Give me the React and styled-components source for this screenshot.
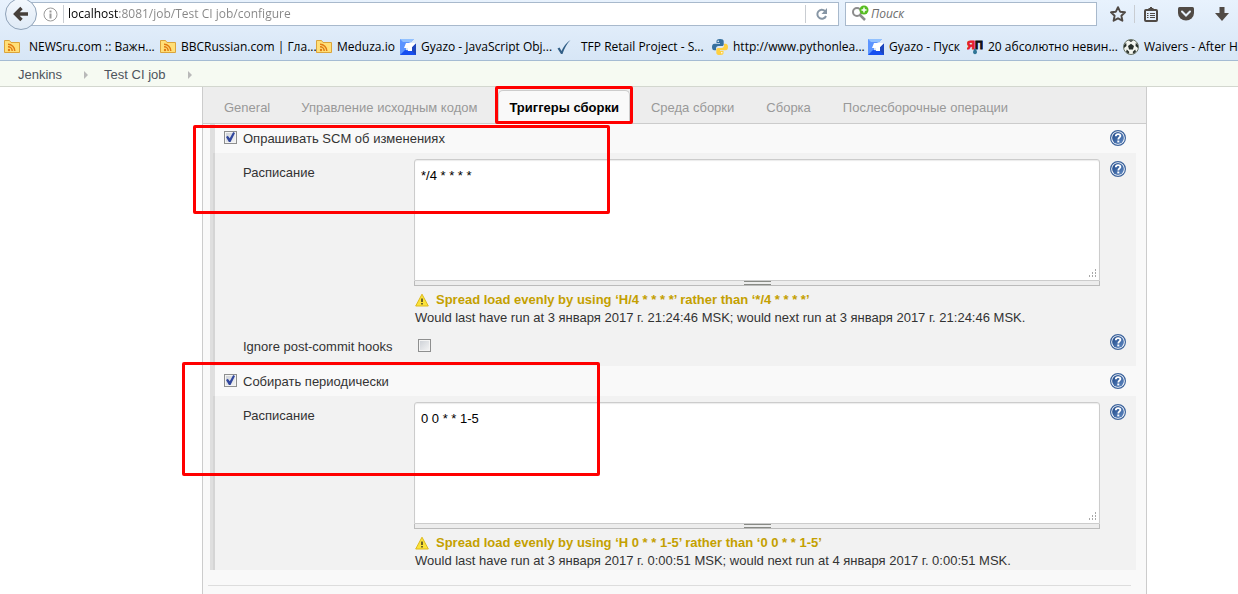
import React from "react";
import styled, { createGlobalStyle, css } from "styled-components";

const GlobalStyle = createGlobalStyle`
  *, *::before, *::after { box-sizing: border-box; }
  html, body { margin: 0; background: #fff; }
  body { overflow: hidden; font: 13px/18px "Liberation Sans", Arial, sans-serif; color: #333; }
`;

const Page = styled.div`
  display: flex;
  flex-direction: column;
  min-height: 100vh;
`;

/* Browser chrome */
const Chrome = styled.header`
  display: flex;
  flex-direction: column;
  gap: 6px;
  overflow: hidden;
  border-bottom: 1px solid #a5bbd3;
  background: linear-gradient(#e8f2fd, #d7e6f6);
  font: 12px/18px "Open Sans", "Noto Sans", sans-serif;
  color: #000;
`;

const NavBar = styled.div`
  display: flex;
  align-items: center;
  height: 28px;
  padding-left: 5px;
`;

const BackButton = styled.button`
  position: relative;
  flex: none;
  display: grid;
  place-items: center;
  width: 32px;
  height: 32px;
  padding: 0;
  border: 1px solid #8fa2b8;
  border-radius: 50%;
  background: linear-gradient(#f4f8fd, #dfeaf6);
`;

const UrlBar = styled.div`
  flex: 1;
  display: flex;
  align-items: center;
  height: 24px;
  margin-left: -16px;
  padding-left: 20px;
  border: 1px solid #a8b9cc;
  background: #fff;
`;

const UrlInput = styled.input`
  flex: 1;
  min-width: 0;
  padding: 0;
  border: 0;
  outline: 0;
  font: inherit;
  color: transparent;
  background: linear-gradient(90deg, #000 50px, #858585 50px);
  -webkit-background-clip: text;
  background-clip: text;
`;

const Divider = styled.span`
  flex: none;
  width: 1px;
  height: 18px;
  background: #c9cdd2;
`;

const IconButton = styled.button`
  flex: none;
  display: grid;
  place-items: center;
  width: ${(p) => p.$width || 32}px;
  height: 22px;
  padding: 0;
  border: 0;
  background: none;
`;

const SearchBar = styled.label`
  flex: none;
  display: flex;
  align-items: center;
  gap: 2px;
  width: 252px;
  height: 24px;
  margin: 0 5px 0 6px;
  padding-left: 5px;
  border: 1px solid #a8b9cc;
  background: #fff;
`;

const SearchInput = styled.input`
  flex: 1;
  min-width: 0;
  padding: 0;
  border: 0;
  outline: 0;
  font: inherit;
  background: none;
  &::placeholder { font-style: italic; color: #6d6d6d; opacity: 1; }
`;

const BookmarkBar = styled.nav`
  display: flex;
  align-items: center;
  height: 26px;
  padding-left: 4px;
`;

const Bookmark = styled.a`
  flex: none;
  display: flex;
  align-items: center;
  gap: ${(p) => (p.$spaced ? 9 : 5)}px;
  width: ${(p) => p.$width}px;
  color: #000;
  text-decoration: none;
  white-space: nowrap;
  svg { flex: none; }
`;

/* Jenkins page */
const Breadcrumbs = styled.nav`
  display: flex;
  align-items: center;
  gap: 22px;
  height: 26px;
  padding: 2px 0 0 18px;
  border-bottom: 1px solid #d3d7cf;
  background: #f6faf2;
`;

const Crumb = styled.a`
  color: #4d545d;
  text-decoration: none;
`;

const CrumbArrow = styled.span`
  margin-right: -6px;
  border: 4px solid transparent;
  border-right: 0;
  border-left-color: #b9b9b9;
`;

const Panel = styled.main`
  flex: 1;
  margin: 0 91px 0 202px;
  border: 1px solid #ccc;
  border-width: 0 1px;
  background: #f9f9f9;
`;

const TabBar = styled.nav`
  position: relative;
  z-index: 1;
  display: flex;
  height: 36px;
  padding: 3px 0 0;
  background: #ededed;
  box-shadow: 0 1px 0 #ccc;
`;

const Tab = styled.a`
  position: relative;
  margin: 0 5px;
  padding: 8px 10px 0;
  border: 1px solid transparent;
  border-bottom: 0;
  border-radius: 5px 5px 0 0;
  color: #999;
  text-decoration: none;
  white-space: nowrap;
  &:first-child { margin: 0 4px 0 10px; }
  ${(p) =>
    p.$active &&
    css`
      border-color: #ccc;
      background: #f9f9f9;
      color: #000;
      font-weight: bold;
    `}
`;

const Highlight = styled.span`
  position: absolute;
  z-index: 2;
  border: 3px solid #f00;
  border-radius: 2px;
  pointer-events: none;
`;

const TabHighlight = styled(Highlight)`
  inset: -5px -4px -1px;
`;

const BlockHighlight = styled(Highlight)`
  top: ${(p) => p.$top}px;
  left: ${(p) => p.$left}px;
  width: ${(p) => p.$width}px;
  height: ${(p) => p.$height}px;
`;

const Trigger = styled.section`
  position: relative;
  margin: 0 10px 0 7px;
`;

const TriggerHeader = styled.div`
  display: flex;
  align-items: flex-start;
  justify-content: space-between;
  height: 30px;
  padding: 7px 10px 0 9px;
  border-left: 5px solid #dfdfdf;
`;

const CheckLabel = styled.label`
  display: flex;
  align-items: center;
  gap: 6px;
`;

const Checkbox = styled.input.attrs({ type: "checkbox" })`
  appearance: none;
  flex: none;
  display: grid;
  place-items: center;
  width: 13px;
  height: 13px;
  margin: 0 0 4px;
  border: 1px solid #8e8f8f;
  background: linear-gradient(135deg, #cbcfd5, #f6f6f6);
  box-shadow: inset 0 0 0 1px #f4f4f4;
  &:checked::before {
    content: "";
    width: 9px;
    height: 10px;
    background: #31479e;
    clip-path: polygon(0 50%, 20% 38%, 42% 62%, 80% 0, 100% 10%, 50% 100%, 32% 100%);
  }
`;

const HelpButton = styled.button`
  display: block;
  width: 16px;
  height: 16px;
  padding: 0;
  border: 0;
  background: none;
  svg { display: block; }
`;

const Fields = styled.div`
  display: grid;
  grid-template-columns: 199px 1fr 36px;
  padding-top: 6px;
  border-left: 3px solid #dfdfdf;
  background: linear-gradient(90deg, #d5d5d5 2px, #f2f2f2 2px);
  padding-left: 2px;
`;

const FieldLabel = styled.label`
  padding: 5px 0 0 28px;
`;

const HelpCell = styled.div`
  padding: 2px 0 0 10px;
`;

const Schedule = styled.textarea`
  display: block;
  width: 100%;
  height: 122px;
  padding: 7px 6px;
  border: 1px solid #ccc;
  border-radius: 3px 3px 0 0;
  outline: 0;
  resize: none;
  background: #fff;
  box-shadow: inset 0 1px 1px #ececec;
  font: inherit;
  color: #000;
`;

const TextareaBox = styled.div`
  position: relative;
`;

const Corner = styled.svg`
  position: absolute;
  right: 3px;
  bottom: 3px;
`;

const Grip = styled.div`
  height: 5px;
  margin-bottom: 5px;
  border: 1px solid #bbb;
  border-top: 0;
  background: #ededed;
  &::before {
    content: "";
    display: block;
    width: 27px;
    height: 4px;
    margin: 0 auto;
    border: 1px solid #888a85;
    border-width: 1px 0;
  }
`;

const Warning = styled.p`
  display: flex;
  align-items: center;
  gap: 7px;
  margin: 0;
  font-weight: bold;
  color: #c4a000;
`;

const NextRun = styled.p`
  margin: 0;
`;

const Messages = styled.div`
  padding-left: 1px;
`;

const HookLabel = styled.label`
  padding: 11px 0 10px 28px;
`;

const HookCell = styled.div`
  padding: 12px 0 0 4px;
`;

const HookHelp = styled.div`
  padding: 7px 0 0 10px;
`;

const Separator = styled.hr`
  height: 1px;
  margin: 15px 15px 0 5px;
  border: 0;
  background: #ddd;
`;

/* Icons */
const BackIcon = () => (
  <svg width="16" height="16" viewBox="0 0 16 16">
    <path d="M15 8H3.500M8.500 2L2.500 8l6 6" fill="none" stroke="#463f3a" strokeWidth="3.400" />
  </svg>
);

const InfoIcon = () => (
  <svg width="15" height="15" viewBox="0 0 15 15">
    <circle cx="7.500" cy="7.500" r="6.500" fill="none" stroke="#9a9a9a" />
    <path d="M7.500 6.500v5M7.500 3.500v2" stroke="#9a9a9a" strokeWidth="2" />
  </svg>
);

const ReloadIcon = () => (
  <svg width="14" height="14" viewBox="0 0 14 14">
    <path d="M10 4A4.500 4.500 0 1 0 11 9" fill="none" stroke="#8796a5" strokeWidth="2" />
    <path d="M12 1v6H6.500z" fill="#8796a5" />
  </svg>
);

const SearchIcon = () => (
  <svg width="18" height="18" viewBox="0 0 18 18">
    <circle cx="6" cy="7" r="4" fill="none" stroke="#8c8c8c" strokeWidth="2" />
    <path d="M9 10l5 5" stroke="#8c8c8c" strokeWidth="2.500" />
    <circle cx="13" cy="5" r="4.500" fill="#57bd22" />
    <path d="M13 2.500v5M10.500 5h5" stroke="#fff" strokeWidth="1.500" />
  </svg>
);

const StarIcon = () => (
  <svg width="16" height="16" viewBox="0 0 16 16">
    <path d="M8 1.200l2.100 4.500 4.900.6-3.600 3.400 1 5L8 12.300l-4.400 2.400 1-5L1 6.300l4.900-.6z" fill="none" stroke="#504a45" strokeWidth="1.900" strokeLinejoin="round" />
  </svg>
);

const ListIcon = () => (
  <svg width="16" height="16" viewBox="0 0 16 16">
    <rect x="2" y="4" width="12" height="11" rx="1" fill="none" stroke="#504a45" strokeWidth="2" />
    <path d="M4 4l2-2h1V1h2v1h1l2 2z" fill="#504a45" />
    <path d="M4 7.500h1.500M4 9.500h1.500M4 11.500h1.500M7 7.500h5M7 9.500h5M7 11.500h5" stroke="#504a45" />
  </svg>
);

const PocketIcon = () => (
  <svg width="16" height="16" viewBox="0 0 16 16">
    <path d="M1.500 1h13q1.500 0 1.500 1.500V7a8 7.500 0 0 1-16 0V2.500Q0 1 1.500 1z" fill="#504a45" />
    <path d="M4 5.500l4 4 4-4" fill="none" stroke="#e6f0fa" strokeWidth="2" strokeLinecap="round" />
  </svg>
);

const DownloadIcon = () => (
  <svg width="16" height="16" viewBox="0 0 16 16">
    <path d="M5.500 1h5v6H15l-7 8-7-8h4.500z" fill="#504a45" />
  </svg>
);

const FeedIcon = () => (
  <svg width="16" height="16" viewBox="0 0 16 16">
    <path d="M.5 13.500v-12h5l1.500 2h8.500v10z" fill="#ffdf78" stroke="#dba43b" />
    <circle cx="5" cy="11" r="1.200" fill="#e07b13" />
    <path d="M4 7.800a4.200 4.200 0 0 1 4.200 4.200M4 5.200a6.800 6.800 0 0 1 6.800 6.800" fill="none" stroke="#e07b13" strokeWidth="1.500" />
  </svg>
);

const GyazoIcon = () => (
  <svg width="16" height="16" viewBox="0 0 16 16">
    <path d="M0 0h14l-3 3-5 2v11H0z" fill="#5b94ff" />
    <path d="M0 0h14l-3 3H3z" fill="#91c1ff" />
    <path d="M0 16l5-5 11 1v4z" fill="#164ff0" />
    <path d="M12 8l4-4v12l-4-4z" fill="#1d46bd" />
    <path d="M6 4l10 0-4 4v4H8V9H4z" fill="#fff" />
  </svg>
);

const CheckIcon = () => (
  <svg width="16" height="16" viewBox="0 0 16 16">
    <path d="M1.500 9.500l2-1 2 3.500Q9 4.500 14.500 1 9.500 6 6.500 15H5z" fill="#315e86" />
  </svg>
);

const PythonIcon = () => (
  <svg width="16" height="16" viewBox="0 0 16 16">
    <path d="M8 0C5 0 4.500 1 4.500 2.300V4H8v.7H2.500C.7 4.700 0 6 0 8s.8 3.300 2.300 3.300H4V9.500C4 8 5 7 6.500 7H10c1 0 1.700-.8 1.700-1.800V2.300C11.700.8 10.500 0 8 0z" fill="#38719f" />
    <path d="M8 16c3 0 3.500-1 3.500-2.300V12H8v-.7h5.500C15.300 11.300 16 10 16 8s-.8-3.300-2.300-3.300H12v1.800C12 8 11 9 9.500 9H6c-1 0-1.700.8-1.700 1.800v2.900C4.300 15.200 5.500 16 8 16z" fill="#fed042" />
    <circle cx="6.200" cy="2.200" r=".8" fill="#fff" />
    <circle cx="9.800" cy="13.800" r=".8" fill="#fff" />
  </svg>
);

const YaPIcon = () => (
  <svg width="16" height="16" viewBox="0 0 16 16" fontFamily="Liberation Sans" fontWeight="bold" fontSize="11">
    <text x="0" y="10" fill="#e5202b" stroke="#e5202b">Я</text>
    <text x="8" y="10" fill="#111" stroke="#111">П</text>
    <path d="M8 9q3 3.500 1.500 5.500-1.500 1.500-3 0Q5 13 8 9z" fill="#2f7596" />
  </svg>
);

const BallIcon = () => (
  <svg width="16" height="16" viewBox="0 0 16 16">
    <circle cx="8" cy="8" r="7.500" fill="#f2f4ee" stroke="#697466" />
    <path d="M8 4.800l3 2.300L9.900 10.500H6.100L5 7.100zM5 1.200h5.500L8 3zM1 6l2.200-2.300.3 3.300L1 9zM15 6l-2.200-2.300-.3 3.300L15 9zM3 13l.8-2.400 2.400 2.200-.2 2zM13 13l-.8-2.400-2.400 2.200.2 2z" fill="#28302a" />
  </svg>
);

const HelpIcon = () => (
  <svg width="16" height="16" viewBox="0 0 16 16">
    <defs>
      <linearGradient id="help" x1="0" y1="0" x2="1" y2="1">
        <stop offset="0" stopColor="#1c4687" />
        <stop offset="1" stopColor="#648cc4" />
      </linearGradient>
    </defs>
    <circle cx="8" cy="8" r="7.400" fill="#fff" stroke="#3c639c" strokeWidth="1.200" />
    <circle cx="8" cy="8" r="5.900" fill="url(#help)" />
    <path d="M5.800 6.300q0-2.200 2.300-2.200t2.300 1.900c0 1.400-2.100 1.500-2.100 3.400" fill="none" stroke="#fff" strokeWidth="1.800" />
    <path d="M7.300 10.500h2v1.900h-2z" fill="#fff" />
  </svg>
);

const WarningIcon = () => (
  <svg width="14" height="14" viewBox="0 0 14 14">
    <path d="M7 1.200L13.300 13H.7z" fill="#fbe33a" stroke="#dcb91c" strokeLinejoin="round" />
    <path d="M7 5.500v3.500M7 10v1.500" stroke="#4b4526" strokeWidth="1.600" />
  </svg>
);

const bookmarks = [
  { text: "NEWSru.com :: Важн...", icon: FeedIcon, width: 156, spaced: true },
  { text: "BBCRussian.com | Гла...", icon: FeedIcon, width: 156 },
  { text: "Meduza.io", icon: FeedIcon, width: 84 },
  { text: "Gyazo - JavaScript Obj...", icon: GyazoIcon, width: 156 },
  { text: "TFP Retail Project - S...", icon: CheckIcon, width: 156, spaced: true },
  { text: "http://www.pythonlea...", icon: PythonIcon, width: 156 },
  { text: "Gyazo - Пуск", icon: GyazoIcon, width: 99 },
  { text: "20 абсолютно невин...", icon: YaPIcon, width: 156 },
  { text: "Waivers - After Ho", icon: BallIcon, width: 156 },
];

const tabs = [
  "General",
  "Управление исходным кодом",
  "Триггеры сборки",
  "Среда сборки",
  "Сборка",
  "Послесборочные операции",
];

const Help = () => (
  <HelpButton type="button" aria-label="Help">
    <HelpIcon />
  </HelpButton>
);

function ScheduleFields({ id, value, warning, nextRun, children }) {
  return (
    <Fields>
      <FieldLabel htmlFor={id}>Расписание</FieldLabel>
      <div>
        <TextareaBox>
          <Schedule id={id} defaultValue={value} spellCheck={false} />
          <Corner width="9" height="9" viewBox="0 0 9 9" fill="#a8a8a8">
            <path d="M7 0h1v2H7zM4 3h1v2H4zM7 3h1v2H7zM1 6h1v2H1zM4 6h1v2H4zM7 6h1v2H7z" />
          </Corner>
        </TextareaBox>
        <Grip />
        <Messages>
          <Warning>
            <WarningIcon />
            {warning}
          </Warning>
          <NextRun>{nextRun}</NextRun>
        </Messages>
      </div>
      <HelpCell>
        <Help />
      </HelpCell>
      {children}
    </Fields>
  );
}

export default function App() {
  return (
    <Page>
      <GlobalStyle />
      <Chrome>
        <NavBar>
          <BackButton type="button" aria-label="Back">
            <BackIcon />
          </BackButton>
          <UrlBar>
            <IconButton type="button" aria-label="Site information" $width={16}>
              <InfoIcon />
            </IconButton>
            <IconButton as="span" $width={10}>
              <Divider />
            </IconButton>
            <UrlInput aria-label="Address" defaultValue="localhost:8081/job/Test CI job/configure" />
            <Divider />
            <IconButton type="button" aria-label="Reload">
              <ReloadIcon />
            </IconButton>
          </UrlBar>
          <SearchBar>
            <SearchIcon />
            <SearchInput placeholder="Поиск" aria-label="Поиск" />
          </SearchBar>
          <IconButton type="button" aria-label="Bookmark this page">
            <StarIcon />
          </IconButton>
          <Divider />
          <IconButton type="button" aria-label="Bookmarks" $width={31}>
            <ListIcon />
          </IconButton>
          <IconButton type="button" aria-label="Pocket" $width={40}>
            <PocketIcon />
          </IconButton>
          <IconButton type="button" aria-label="Downloads">
            <DownloadIcon />
          </IconButton>
        </NavBar>
        <BookmarkBar>
          {bookmarks.map(({ text, icon: Icon, width, spaced }) => (
            <Bookmark key={text} href="#" $width={width} $spaced={spaced}>
              <Icon />
              {text}
            </Bookmark>
          ))}
        </BookmarkBar>
      </Chrome>

      <Breadcrumbs>
        <Crumb href="#">Jenkins</Crumb>
        <CrumbArrow />
        <Crumb href="#">Test CI job</Crumb>
        <CrumbArrow />
      </Breadcrumbs>

      <Panel>
        <TabBar>
          {tabs.map((name) => {
            const active = name === "Триггеры сборки";
            return (
              <Tab key={name} href="#" $active={active}>
                {name}
                {active && <TabHighlight />}
              </Tab>
            );
          })}
        </TabBar>

        <Trigger>
          <BlockHighlight $top={2} $left={-17} $width={417} $height={89} />
          <TriggerHeader>
            <CheckLabel>
              <Checkbox defaultChecked />
              Опрашивать SCM об изменениях
            </CheckLabel>
            <Help />
          </TriggerHeader>
          <ScheduleFields
            id="scm-schedule"
            value="*/4 * * * *"
            warning="Spread load evenly by using ‘H/4 * * * *’ rather than ‘*/4 * * * *’"
            nextRun="Would last have run at 3 января 2017 г. 21:24:46 MSK; would next run at 3 января 2017 г. 21:24:46 MSK."
          >
            <HookLabel htmlFor="ignore-hooks">Ignore post-commit hooks</HookLabel>
            <HookCell>
              <Checkbox id="ignore-hooks" />
            </HookCell>
            <HookHelp>
              <Help />
            </HookHelp>
          </ScheduleFields>
        </Trigger>

        <Trigger>
          <BlockHighlight $top={-4} $left={-28} $width={418} $height={114} />
          <TriggerHeader>
            <CheckLabel>
              <Checkbox defaultChecked />
              Собирать периодически
            </CheckLabel>
            <Help />
          </TriggerHeader>
          <ScheduleFields
            id="timer-schedule"
            value="0 0 * * 1-5"
            warning="Spread load evenly by using ‘H 0 * * 1-5’ rather than ‘0 0 * * 1-5’"
            nextRun="Would last have run at 3 января 2017 г. 0:00:51 MSK; would next run at 4 января 2017 г. 0:00:51 MSK."
          />
        </Trigger>
        <Separator />
      </Panel>
    </Page>
  );
}
